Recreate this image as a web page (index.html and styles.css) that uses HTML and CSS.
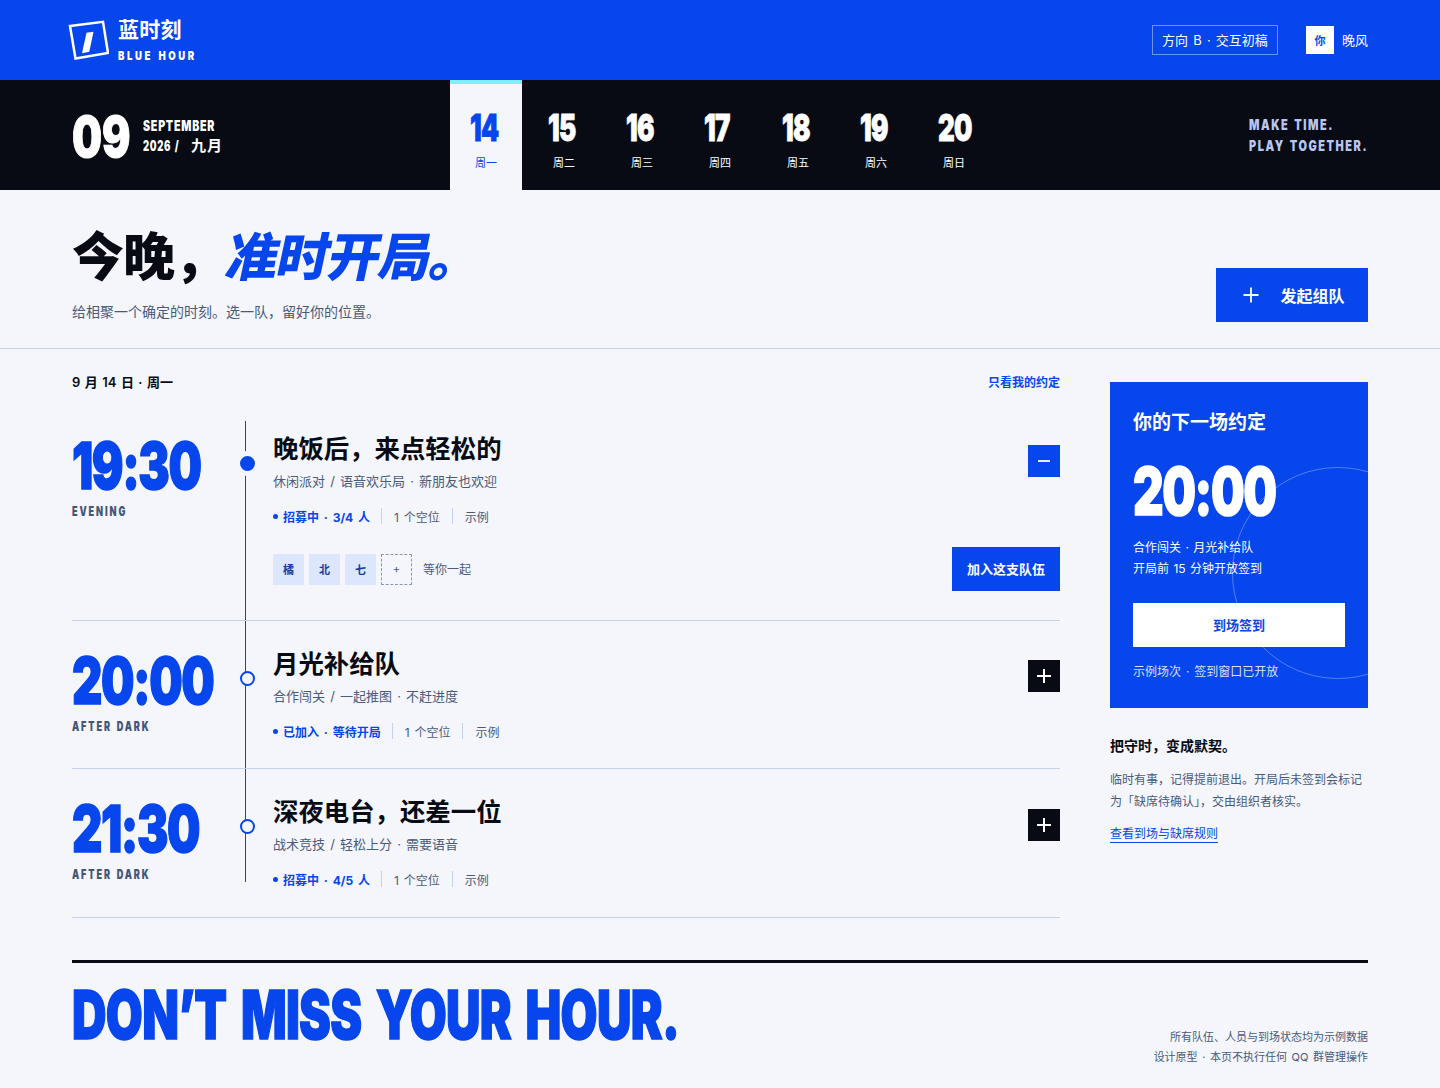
FILE: index.html
```html
<!DOCTYPE html>
<html lang="zh-CN">
<head>
    <meta charset="UTF-8">
    <meta name="viewport" content="width=device-width, initial-scale=1.0">
    <title>蓝时刻 Blue Hour</title>
    <link rel="stylesheet" href="styles.css">
</head>
<body>
    <header class="topbar">
        <div class="brand">
            <svg class="logo" width="41" height="40" viewBox="0 0 41 40">
                <path d="M2 6 L35 1.800 L40 33 L7.500 38.500 Z" fill="none" stroke="#fff" stroke-width="2.500"/>
                <path d="M18.500 12.700 L25.500 11.700 L21.300 31.700 L14 33.300 Z" fill="#fff"/>
            </svg>
            <div>
                <div class="brand-name">蓝时刻</div>
                <div class="brand-sub"><span class="cond">BLUE HOUR</span></div>
            </div>
        </div>
        <div class="topbar-right">
            <span class="draft">方向 B · 交互初稿</span>
            <span class="me"><span class="me-box">你</span><span class="me-name">晚风</span></span>
        </div>
    </header>

    <nav class="datebar">
        <div class="month">
            <div class="month-num"><span class="cond">09</span></div>
            <div class="month-text">
                <div><span class="cond">SEPTEMBER</span></div>
                <div class="month-year"><span class="year-num"><span class="cond">2026 /</span></span><span class="year-cn">九月</span></div>
            </div>
        </div>
        <div class="days">
            <div class="day active"><b><span class="cond">14</span></b><span class="day-name">周一</span></div>
            <div class="day"><b><span class="cond">15</span></b><span class="day-name">周二</span></div>
            <div class="day"><b><span class="cond">16</span></b><span class="day-name">周三</span></div>
            <div class="day"><b><span class="cond">17</span></b><span class="day-name">周四</span></div>
            <div class="day"><b><span class="cond">18</span></b><span class="day-name">周五</span></div>
            <div class="day"><b><span class="cond">19</span></b><span class="day-name">周六</span></div>
            <div class="day"><b><span class="cond">20</span></b><span class="day-name">周日</span></div>
        </div>
        <div class="slogan">
            <div><span class="cond">MAKE TIME.</span></div>
            <div><span class="cond">PLAY TOGETHER.</span></div>
        </div>
    </nav>

    <section class="hero">
        <div>
            <h1>今晚，<em>准时开局。</em></h1>
            <p class="hero-sub">给相聚一个确定的时刻。选一队，留好你的位置。</p>
        </div>
        <button class="create-btn">
            <svg width="16" height="16" viewBox="0 0 16 16"><path d="M8 0.500 V15.500 M0.500 8 H15.500" stroke="#fff" stroke-width="1.800" fill="none"/></svg>
            发起组队
        </button>
    </section>

    <main class="content">
        <div class="schedule">
            <div class="schedule-head">
                <span class="schedule-date">9 月 14 日 · 周一</span>
                <a href="#" class="only-mine">只看我的约定</a>
            </div>

            <article class="row first">
                <div class="time-col">
                    <div class="time"><span class="cond">19:30</span></div>
                    <div class="period"><span class="cond">EVENING</span></div>
                </div>
                <div class="row-main">
                    <span class="dot solid"></span>
                    <div class="row-head">
                        <div>
                            <h2>晚饭后，来点轻松的</h2>
                            <p class="row-sub">休闲派对 / 语音欢乐局 · 新朋友也欢迎</p>
                            <ul class="status">
                                <li class="status-main">招募中 · 3/4 人</li>
                                <li>1 个空位</li>
                                <li>示例</li>
                            </ul>
                        </div>
                        <button class="toggle blue">
                            <svg width="14" height="14" viewBox="0 0 14 14"><path d="M1 7 H13" stroke="#fff" stroke-width="1.800"/></svg>
                        </button>
                    </div>
                    <div class="team">
                        <div class="avatars">
                            <span class="avatar">橘</span>
                            <span class="avatar">北</span>
                            <span class="avatar">七</span>
                            <span class="avatar empty">+</span>
                            <span class="waiting">等你一起</span>
                        </div>
                        <button class="join-btn">加入这支队伍</button>
                    </div>
                </div>
            </article>

            <article class="row">
                <div class="time-col">
                    <div class="time"><span class="cond">20:00</span></div>
                    <div class="period"><span class="cond">AFTER DARK</span></div>
                </div>
                <div class="row-main">
                    <span class="dot"></span>
                    <div class="row-head">
                        <div>
                            <h2>月光补给队</h2>
                            <p class="row-sub">合作闯关 / 一起推图 · 不赶进度</p>
                            <ul class="status">
                                <li class="status-main">已加入 · 等待开局</li>
                                <li>1 个空位</li>
                                <li>示例</li>
                            </ul>
                        </div>
                        <button class="toggle">
                            <svg width="14" height="14" viewBox="0 0 14 14"><path d="M7 0 V14 M0 7 H14" stroke="#fff" stroke-width="2"/></svg>
                        </button>
                    </div>
                </div>
            </article>

            <article class="row last">
                <div class="time-col">
                    <div class="time"><span class="cond">21:30</span></div>
                    <div class="period"><span class="cond">AFTER DARK</span></div>
                </div>
                <div class="row-main">
                    <span class="dot"></span>
                    <div class="row-head">
                        <div>
                            <h2>深夜电台，还差一位</h2>
                            <p class="row-sub">战术竞技 / 轻松上分 · 需要语音</p>
                            <ul class="status">
                                <li class="status-main">招募中 · 4/5 人</li>
                                <li>1 个空位</li>
                                <li>示例</li>
                            </ul>
                        </div>
                        <button class="toggle">
                            <svg width="14" height="14" viewBox="0 0 14 14"><path d="M7 0 V14 M0 7 H14" stroke="#fff" stroke-width="2"/></svg>
                        </button>
                    </div>
                </div>
            </article>
        </div>

        <aside class="side">
            <div class="next-card">
                <span class="next-circle"></span>
                <h3>你的下一场约定</h3>
                <div class="next-time"><span class="cond">20:00</span></div>
                <p class="next-info">合作闯关 · 月光补给队<br>开局前 15 分钟开放签到</p>
                <button class="checkin-btn">到场签到</button>
                <p class="next-note">示例场次 · 签到窗口已开放</p>
            </div>
            <div class="rule">
                <h4>把守时，变成默契。</h4>
                <p>临时有事，记得提前退出。开局后未签到会标记为「缺席待确认」，交由组织者核实。</p>
                <a href="#">查看到场与缺席规则</a>
            </div>
        </aside>
    </main>

    <footer class="footer">
        <div class="footer-title"><span class="cond">DON’T MISS YOUR HOUR.</span></div>
        <p class="footer-note">所有队伍、人员与到场状态均为示例数据<br>设计原型 · 本页不执行任何 QQ 群管理操作</p>
    </footer>
</body>
</html>
```
FILE: styles.css
```css
* {
    margin: 0;
    padding: 0;
    box-sizing: border-box;
}

body {
    font-family: Inter, "Noto Sans CJK SC", sans-serif;
    background-color: #f4f6fc;
    color: #080b14;
    word-spacing: 1.5px;
}

button {
    font-family: inherit;
    border: none;
    cursor: pointer;
}

a {
    text-decoration: none;
}

/* squeezed heavy latin, stands in for a condensed poster face */
.cond {
    display: inline-block;
    font-weight: 900;
    white-space: nowrap;
    transform: scaleX(0.66);
    transform-origin: left center;
}

/* top bar */
.topbar {
    height: 80px;
    background-color: #0646ec;
    color: white;
    display: flex;
    justify-content: space-between;
    align-items: center;
    padding: 0 72px 0 68px;
}

.brand {
    display: flex;
    align-items: center;
    gap: 9px;
}

.brand-name {
    font-size: 21px;
    font-weight: 700;
    line-height: 28px;
    letter-spacing: 0.3px;
    margin-top: -2px;
}

.brand-sub {
    font-size: 12px;
    line-height: 14px;
    letter-spacing: 3.2px;
    margin-top: 5px;
    height: 14px;
}

.brand-sub .cond {
    transform: scaleX(0.8);
}

.topbar-right {
    display: flex;
    align-items: center;
    gap: 28px;
    font-size: 13px;
}

.draft {
    border: 1px solid #6c93f6;
    height: 30px;
    width: 126px;
    padding-bottom: 2px;
    display: flex;
    align-items: center;
    justify-content: center;
    white-space: nowrap;
}

.me {
    display: flex;
    align-items: center;
    gap: 8px;
}

.me-name {
    padding-bottom: 2px;
}

.me-box {
    width: 28px;
    height: 28px;
    background: white;
    color: #0646ec;
    display: flex;
    align-items: center;
    justify-content: center;
    font-size: 11px;
    font-weight: 700;
}

/* date strip */
.datebar {
    height: 110px;
    background: #080b14;
    color: white;
    display: flex;
    align-items: center;
    padding: 0 72px;
}

.month {
    display: flex;
    align-items: center;
    width: 378px;
}

.month-num {
    font-size: 56px;
    line-height: 56px;
    width: 71px;
    margin-top: 4px;
    -webkit-text-stroke: 1px white;
}

.month-num .cond {
    transform: scaleX(0.755);
}

.month-text {
    font-size: 14px;
    line-height: 20px;
    letter-spacing: 1px;
    margin-top: 1px;
}

.month-text .cond {
    transform: scaleX(0.76);
}

.month-year {
    display: flex;
    font-weight: 700;
}

.year-num {
    width: 48px;
}

.year-num .cond {
    transform: scaleX(0.68);
}

.year-cn {
    font-size: 15px;
}

.days {
    display: flex;
    gap: 6px;
    flex: 1;
    height: 110px;
}

.day {
    width: 72px;
    display: flex;
    flex-direction: column;
    align-items: center;
    padding-top: 28px;
}

.day b {
    font-size: 37px;
    line-height: 40px;
    height: 40px;
    width: 32px;
    white-space: nowrap;
    -webkit-text-stroke: 0.8px currentColor;
}

.day .cond {
    transform: scaleX(0.7);
    letter-spacing: -1px;
}

.day-name {
    font-size: 11px;
    line-height: 16px;
    margin-top: 7px;
}

.day.active {
    background: #f4f6fc;
    color: #0646ec;
    border-top: 4px solid #7ff0ff;
    padding-top: 24px;
}

.slogan {
    width: 119px;
    font-size: 14px;
    line-height: 21px;
    letter-spacing: 2px;
    color: #b9c6f2;
}

.slogan .cond {
    transform: scaleX(0.78);
}

/* hero */
.hero {
    height: 159px;
    border-bottom: 1px solid #c5d2ee;
    padding: 37px 72px 26px;
    display: flex;
    justify-content: space-between;
    align-items: flex-end;
}

h1 {
    font-size: 52px;
    line-height: 62px;
    font-weight: 900;
    letter-spacing: -1px;
}

h1 em {
    display: inline-block;
    color: #0646ec;
    font-style: normal;
    transform: skewX(-12deg);
    margin-left: 2px;
}

.hero-sub {
    font-size: 14px;
    line-height: 20px;
    margin-top: 13px;
    color: #4a5a7a;
}

.create-btn {
    width: 152px;
    height: 54px;
    padding: 0 0 1px 4px;
    background: #0646ec;
    color: white;
    font-size: 16px;
    font-weight: 700;
    display: flex;
    align-items: center;
    justify-content: center;
    gap: 21px;
}

/* schedule */
.content {
    display: grid;
    grid-template-columns: 988px 258px;
    column-gap: 50px;
    padding: 0 72px;
}

.schedule {
    padding-top: 24px;
}

.schedule-head {
    display: flex;
    justify-content: space-between;
    align-items: center;
    height: 18px;
    padding-bottom: 2px;
    margin-bottom: 30px;
}

.schedule-date {
    font-size: 13px;
    font-weight: 600;
    word-spacing: 1.2px;
}

.only-mine {
    font-size: 12px;
    font-weight: 700;
    color: #0646ec;
}

.row {
    display: flex;
    border-bottom: 1px solid #c5d2ee;
}

.time-col {
    width: 173px;
    padding-top: 27px;
}

.first .time-col {
    padding-top: 12px;
}

.time {
    font-size: 65px;
    line-height: 65px;
    height: 65px;
    letter-spacing: -2px;
    color: #0646ec;
    -webkit-text-stroke: 1.5px #0646ec;
}

.time .cond {
    transform: scaleX(0.725);
}

.period {
    font-size: 13px;
    line-height: 14px;
    letter-spacing: 2.7px;
    color: #44557a;
    margin-top: 6px;
}

.period .cond {
    transform: scaleX(0.7);
}

.row-main {
    position: relative;
    flex: 1;
    padding: 26px 0 27px 28px;
}

.first .row-main {
    padding: 11px 0 29px 28px;
}

.last .row-main {
    padding-bottom: 28px;
}

.row-main::before {
    content: "";
    position: absolute;
    left: 0;
    top: 0;
    bottom: 0;
    width: 1px;
    background: #0646ec;
}

.last .row-main::before {
    bottom: 35px;
}

.dot {
    position: absolute;
    left: -5px;
    top: 50px;
    width: 15px;
    height: 15px;
    border-radius: 50%;
    border: 2px solid #0646ec;
    background: #f4f6fc;
}

.dot.solid {
    top: 35px;
    background: #0646ec;
    box-shadow: 0 0 0 5px #f4f6fc;
}

.row-head {
    display: flex;
    justify-content: space-between;
    align-items: flex-start;
}

h2 {
    font-size: 25.4px;
    line-height: 34px;
    font-weight: 700;
}

.row-sub {
    font-size: 13px;
    line-height: 20px;
    margin-top: 5px;
    color: #4a5a7a;
}

.status {
    display: flex;
    list-style: none;
    margin-top: 15px;
    height: 20px;
    align-items: center;
    font-size: 12px;
    color: #4a5a7a;
}

.status li {
    display: flex;
    align-items: center;
    height: 16px;
    padding: 0 12px;
    border-left: 1px solid #c5d2ee;
}

.status .status-main {
    padding: 0 11px 0 0;
    border-left: none;
    color: #0646ec;
    font-weight: 700;
    word-spacing: 2px;
}

.status-main::before {
    content: "";
    width: 5px;
    height: 5px;
    border-radius: 50%;
    background: #0646ec;
    margin-right: 5px;
}

.toggle {
    width: 32px;
    height: 32px;
    margin-top: 13px;
    background: #080b14;
    display: flex;
    align-items: center;
    justify-content: center;
}

.last .toggle {
    margin-top: 14px;
}

.toggle.blue {
    background: #0646ec;
}

.team {
    display: flex;
    justify-content: space-between;
    align-items: center;
    margin-top: 21px;
}

.avatars {
    display: flex;
    align-items: center;
    gap: 5px;
}

.avatar {
    width: 31px;
    height: 31px;
    padding-bottom: 1px;
    background: #dce6fd;
    color: #1a3f9e;
    font-size: 11px;
    font-weight: 700;
    display: flex;
    align-items: center;
    justify-content: center;
}

.avatar.empty {
    background: none;
    border: 1px dashed #8a97b5;
    color: #4a5a7a;
    font-weight: 400;
}

.waiting {
    font-size: 12px;
    color: #4a5a7a;
    margin-left: 6px;
    padding-bottom: 2px;
}

.join-btn {
    width: 108px;
    height: 44px;
    padding-bottom: 2px;
    background: #0646ec;
    color: white;
    font-size: 13px;
    font-weight: 700;
}

/* right column */
.side {
    padding-top: 33px;
}

.next-card {
    position: relative;
    overflow: hidden;
    height: 326px;
    padding: 27px 23px 0;
    background: #0646ec;
    color: white;
}

.next-circle {
    position: absolute;
    left: 122px;
    top: 85px;
    width: 212px;
    height: 212px;
    border-radius: 50%;
    border: 1px solid rgba(255, 255, 255, 0.3);
}

.next-card h3 {
    position: relative;
    font-size: 19px;
    line-height: 28px;
    font-weight: 700;
}

.next-time {
    position: relative;
    font-size: 66px;
    line-height: 66px;
    height: 66px;
    margin-top: 21px;
    letter-spacing: -2px;
    -webkit-text-stroke: 1.5px white;
}

.next-time .cond {
    transform: scaleX(0.72);
}

.next-info {
    position: relative;
    font-size: 12px;
    line-height: 21px;
    margin-top: 13px;
    word-spacing: 1px;
}

.checkin-btn {
    position: relative;
    display: block;
    width: 212px;
    height: 44px;
    padding-bottom: 2px;
    margin-top: 24px;
    background: white;
    color: #0646ec;
    font-size: 13px;
    font-weight: 700;
}

.next-note {
    position: relative;
    font-size: 12px;
    line-height: 18px;
    margin-top: 16px;
    color: #d5e0ff;
}

.rule {
    padding-top: 28px;
}

.rule h4 {
    font-size: 14px;
    line-height: 20px;
    font-weight: 700;
}

.rule p {
    font-size: 12px;
    line-height: 22px;
    margin-top: 13px;
    color: #4a5a7a;
}

.rule a {
    display: inline-block;
    margin-top: 13px;
    font-size: 12px;
    line-height: 16px;
    color: #0646ec;
    border-bottom: 1px solid #0646ec;
}

/* footer */
.footer {
    margin: 42px 72px 0;
    border-top: 3px solid #080b14;
    display: flex;
    justify-content: space-between;
    align-items: flex-start;
}

.footer-title {
    width: 700px;
    font-size: 67px;
    line-height: 67px;
    height: 67px;
    margin-top: 18px;
    letter-spacing: -1px;
    word-spacing: 8px;
    color: #0646ec;
    -webkit-text-stroke: 1.5px #0646ec;
}

.footer-title .cond {
    transform: scaleX(0.713);
}

.footer-note {
    font-size: 11px;
    line-height: 20px;
    text-align: right;
    color: #4a5a7a;
    margin-top: 64px;
}
```
